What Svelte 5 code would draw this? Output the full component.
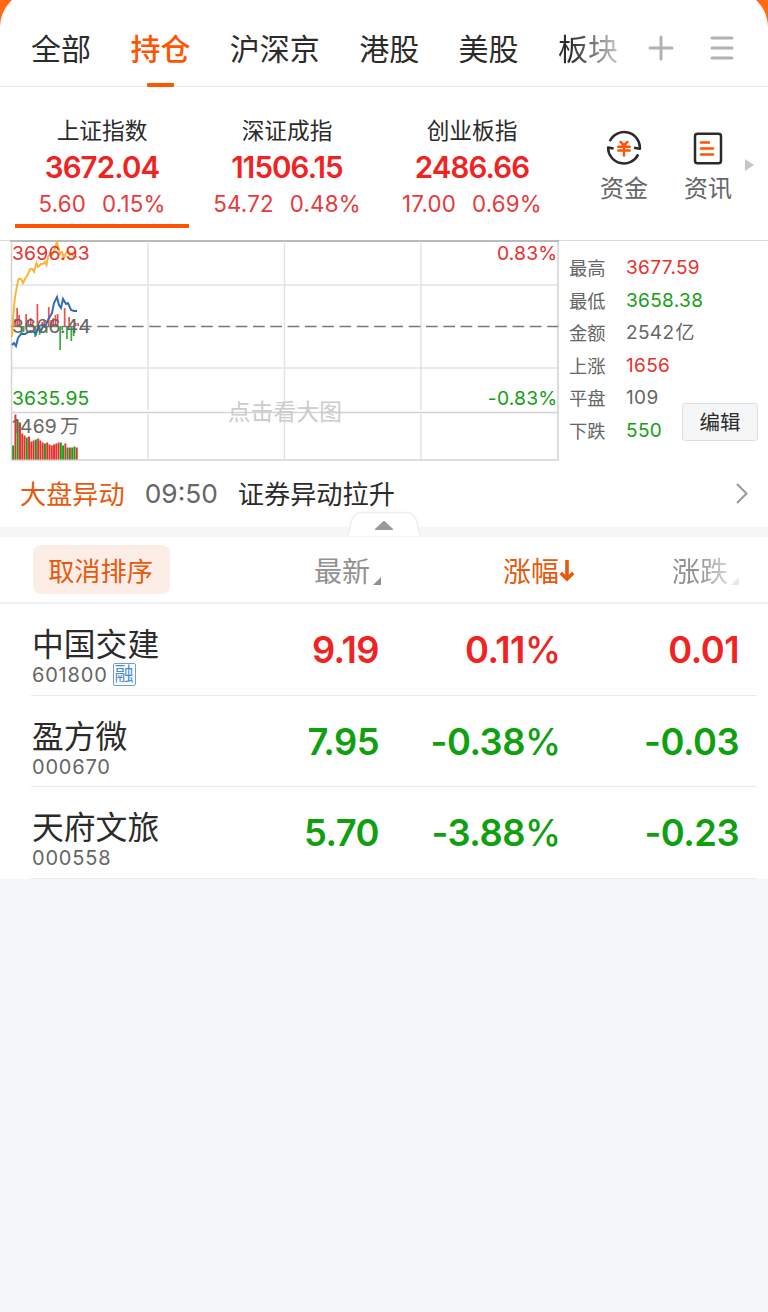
<script lang="ts">
  type Trend = 'up' | 'down' | 'flat';

  const tabs = ['全部', '持仓', '沪深京', '港股', '美股', '板块'];
  let activeTab = $state('持仓');

  const indices = [
    { name: '上证指数', value: '3672.04', change: '5.60', percent: '0.15%' },
    { name: '深证成指', value: '11506.15', change: '54.72', percent: '0.48%' },
    { name: '创业板指', value: '2486.66', change: '17.00', percent: '0.69%' }
  ];
  let activeIndex = $state(0);

  const stats: { label: string; value: string; unit?: string; trend: Trend }[] = [
    { label: '最高', value: '3677.59', trend: 'up' },
    { label: '最低', value: '3658.38', trend: 'down' },
    { label: '金额', value: '2542', unit: '亿', trend: 'flat' },
    { label: '上涨', value: '1656', trend: 'up' },
    { label: '平盘', value: '109', trend: 'flat' },
    { label: '下跌', value: '550', trend: 'down' }
  ];

  const stocks: { name: string; code: string; margin?: boolean; price: string; percent: string; change: string; trend: Trend }[] = [
    { name: '中国交建', code: '601800', margin: true, price: '9.19', percent: '0.11%', change: '0.01', trend: 'up' },
    { name: '盈方微', code: '000670', price: '7.95', percent: '-0.38%', change: '-0.03', trend: 'down' },
    { name: '天府文旅', code: '000558', price: '5.70', percent: '-3.88%', change: '-0.23', trend: 'down' }
  ];

  // [x, offset from the zero line], positive is up
  const ticks = [
    [3, 3], [5, 7], [7, 18], [9, 11], [11.5, -8], [13.5, -6], [16, 12], [18, 6], [20.5, 8], [22.5, 4],
    [25, -11], [27.3, 22], [29.5, -9], [32, 4], [34, 5], [36.5, -7], [38.6, 19], [41, 6], [43, 8],
    [45.3, 11], [47.5, 12], [50, -24], [52, -4], [54.5, 18], [56.8, -13], [59, 9], [61.2, -15], [63.5, -10],
    [65.5, 3], [68, 3]
  ];

  // turnover bars, negative for the minutes that closed lower
  const volumes = [
    -14, 45, -39, 37, 26, 24, -22, 23, 18, 19, -20, 21, 19, 17, -16, 17, 15, 14, 15, 16, 17, -17, -14,
    16, -12, 12, -12, -13, 12
  ];
</script>

<div class="screen">
  <header>
    <nav>
      {#each tabs as tab}
        <button class="tab" class:active={tab === activeTab} class:fading={tab === '板块'} onclick={() => (activeTab = tab)}>{tab}</button>
      {/each}
    </nav>
    <svg class="plus" width="26" height="26" viewBox="0 0 26 26"><path d="M13 2V24M2 13H24" /></svg>
    <svg class="menu" width="24" height="26" viewBox="0 0 24 26"><path d="M2 3H22M2 13H22M2 23H22" /></svg>
  </header>

  <section class="overview">
    {#each indices as index, i}
      <button class="index" class:active={i === activeIndex} onclick={() => (activeIndex = i)}>
        <span class="name">{index.name}</span>
        <strong>{index.value}</strong>
        <span class="change"><span>{index.change}</span><span>{index.percent}</span></span>
      </button>
    {/each}
    <div class="shortcuts">
      <button class="shortcut">
        <svg width="36" height="36" viewBox="0 0 36 36">
          <path class="line" d="M3.8 11.2A15.8 15.8 0 0 1 33.9 18.8L28 17.7M32.2 24.4A15.8 15.8 0 0 1 2.1 17.6L7.6 18.6" />
          <path class="accent" d="M14.6 11.8L18 15.4L21.4 11.8M12.3 16.8H23.7M12.3 20.6H23.7M18 16V25.5" />
        </svg>
        资金
      </button>
      <button class="shortcut">
        <svg width="36" height="36" viewBox="0 0 36 36">
          <rect class="line" x="5" y="3.8" width="26" height="29.5" rx="2.5" />
          <path class="accent" d="M11 12.5H19M11 18.5H23M11 24.5H23" />
        </svg>
        资讯
      </button>
      <i class="more"></i>
    </div>
  </section>

  <section class="market">
    <svg class="chart" width="549" height="222" viewBox="0 0 549 222">
      <path class="grid" d="M1 45H548M1 128H548M138 3V170M274.5 3V170M411 3V170M138 174V220M274.5 174V220M411 174V220" />
      <path class="frame" d="M1.5 1V220.5M548 1V220.5M1 172.5H548M1 220H549" />
      <path class="top" d="M0 1H549" />
      <text class="hint" x="275" y="180" text-anchor="middle">点击看大图</text>
      {#each volumes as v, i}
        <rect class={v > 0 ? 'up' : 'down'} x={2.2 + i * 2.27} y={219.5 - Math.abs(v)} width="1.95" height={Math.abs(v)} />
      {/each}
      {#each ticks as [x, h]}
        <rect class={h > 0 ? 'up' : 'down'} x={x - 0.7} y={h > 0 ? 86 - h : 86} width="1.7" height={Math.abs(h)} opacity="0.85" />
      {/each}
      <path class="dash" d="M0.8 86.5H548" />
      <path class="average" d="M2 97L3 78L5 57L7 46L8.5 39H11L13 43L16 37L17.5 35L20 29H22L24 32L26.5 23L28 27L31 24H33L35 22L36.5 25L38 17L40 14L42 15L44 12L45 8L47 2L49 10L50 14L52 12L54 18L56 13L58 11L60 15L62 14L64 17H67" />
      <path class="price" d="M2 105L4 103L6 106L8 98L11 94L15 94L20 91L24 92L26 94L28 87L31 91L33 86L35 87L38 80L42 73L44 63L47 57L49 65L51 68L53 59L56 64L58 63L61 70L64 71H67" />
      <text class="up" x="2" y="20">3696.93</text>
      <text class="flat" x="2" y="93">3666.44</text>
      <text class="down" x="2" y="165">3635.95</text>
      <text class="up" x="547.5" y="20" text-anchor="end">0.83%</text>
      <text class="down" x="547.5" y="165" text-anchor="end">-0.83%</text>
      <text class="flat" x="2" y="193">1469<tspan dx="3">万</tspan></text>
    </svg>
    <dl>
      {#each stats as stat}
        <div>
          <dt>{stat.label}</dt>
          <dd class={stat.trend}>{stat.value}{#if stat.unit}<span class="unit">{stat.unit}</span>{/if}</dd>
        </div>
      {/each}
    </dl>
    <button class="edit">编辑</button>
  </section>

  <section class="news">
    <span class="topic">大盘异动</span>
    <time>09:50</time>
    <span class="headline">证券异动拉升</span>
    <svg width="14" height="24" viewBox="0 0 14 24"><path d="M2 3L11.5 12.5L2 22" /></svg>
    <svg class="handle" width="74" height="26" viewBox="0 0 74 26">
      <path class="flap" d="M1 25C3 17 3 1.5 15 1.5H59C71 1.5 71 17 73 25" />
      <path class="arrow" d="M37 10L46 18.5H28Z" />
    </svg>
  </section>

  <section class="list">
    <div class="head">
      <button class="reset">取消排序</button>
      <span class="col">最新<i></i></span>
      <span class="col sorted">涨幅<svg width="16" height="24" viewBox="0 0 16 24"><path d="M8 1V20M1.8 14L8 20L14.2 14" /></svg></span>
      <span class="col last">涨跌<i></i></span>
    </div>
    {#each stocks as stock}
      <div class="row {stock.trend}">
        <div class="stock">
          <span class="title">{stock.name}</span>
          <span class="code">{stock.code}{#if stock.margin}<em>融</em>{/if}</span>
        </div>
        <b>{stock.price}</b>
        <b>{stock.percent.slice(0, -1)}<small>%</small></b>
        <b>{stock.change}</b>
      </div>
    {/each}
  </section>
</div>

<style>
  :global(body) {
    background: #f5f6f8;
  }

  .screen {
    width: 768px;
    height: 1312px;
    overflow: hidden;
    background: linear-gradient(#ff6a13 60px, #f5f6f8 60px);
    color: #2b2b2b;
    font-family: Inter, 'Noto Sans CJK SC', sans-serif;
  }

  button {
    padding: 0;
    border: 0;
    background: none;
    color: inherit;
    font: inherit;
  }

  .up {
    color: #e9302e;
    fill: #e9302e;
  }

  .down {
    color: #14a014;
    fill: #14a014;
  }

  .flat {
    color: #666;
    fill: #666;
  }

  header {
    box-sizing: border-box;
    display: flex;
    align-items: center;
    height: 96px;
    margin-top: -9px;
    padding: 9px 0 0 31px;
    border-bottom: 1px solid #eaeaea;
    border-radius: 36px 36px 0 0;
    background: #fff;
  }

  nav {
    display: flex;
    gap: 39.4px;
    align-self: stretch;
  }

  .tab {
    display: flex;
    flex-direction: column;
    justify-content: space-between;
    align-items: center;
    padding-top: 27px;
    font-size: 30px;
    line-height: 45px;
    white-space: nowrap;
  }

  .tab.active {
    color: #ff5400;
    font-weight: 500;
  }

  .tab.active::after {
    content: '';
    width: 27px;
    height: 4px;
    margin-bottom: -1px;
    border-radius: 1px;
    background: #ff5400;
  }

  .tab.fading {
    background: linear-gradient(90deg, #2b2b2b 20%, #c8c8c8);
    background-clip: text;
    color: transparent;
  }

  header svg {
    margin-top: 10px;
    fill: none;
    stroke: #b2b2b2;
    stroke-width: 3;
    stroke-linecap: round;
  }

  .plus {
    margin-left: 30px;
  }

  .menu {
    margin-left: 36px;
  }

  .overview {
    box-sizing: border-box;
    display: flex;
    gap: 11px;
    height: 153px;
    padding: 28px 0 12px 15px;
    background: #fff;
  }

  .index {
    display: flex;
    flex-direction: column;
    align-items: center;
    width: 174px;
    border-bottom: 4px solid transparent;
  }

  .index.active {
    border-color: #ff5400;
  }

  .index .name {
    padding-top: 1px;
    font-size: 22.7px;
    line-height: 30px;
  }

  .index strong {
    margin-top: -1px;
    color: #f02323;
    font-size: 29.5px;
    font-weight: 600;
    line-height: 44px;
    letter-spacing: -0.9px;
  }

  .change {
    display: flex;
    gap: 16px;
    color: #e9393a;
    font-size: 22.3px;
    line-height: 30px;
    letter-spacing: 0.2px;
  }

  .shortcuts {
    display: flex;
    align-items: flex-start;
    margin-left: 30px;
    padding-top: 15px;
  }

  .shortcut {
    display: flex;
    flex-direction: column;
    align-items: center;
    width: 48px;
    margin-right: 36px;
    color: #666;
    font-size: 24px;
    line-height: 45px;
  }

  .shortcut svg {
    fill: none;
    stroke-width: 2.5;
    stroke-linejoin: round;
  }

  .line {
    stroke: #2b2b2b;
  }

  .accent {
    stroke: #ff5400;
    stroke-linecap: round;
  }

  .more {
    margin: 29px 0 0 -23px;
    border-left: 9px solid #c6c6c6;
    border-top: 6px solid transparent;
    border-bottom: 6px solid transparent;
  }

  .market {
    display: flex;
    height: 221px;
    padding-left: 10px;
    background: linear-gradient(#dcdcdc 1px, #fff 1px);
  }

  .chart {
    flex: none;
    fill: none;
  }

  .grid {
    stroke: #e2e2ea;
    stroke-width: 1.5;
  }

  .frame {
    stroke: #d3d3d8;
    stroke-width: 1.5;
  }

  .top {
    stroke: #bbb;
    stroke-width: 2;
  }

  .dash {
    stroke: #777;
    stroke-width: 1.5;
    stroke-dasharray: 11.7 5.6;
  }

  .average {
    stroke: #f9b73a;
    stroke-width: 2;
  }

  .price {
    stroke: #2f6dbb;
    stroke-width: 2;
  }

  .chart text {
    font-size: 19.3px;
    letter-spacing: 0.2px;
  }

  .chart .hint {
    fill: #ccc;
    font-size: 22.7px;
  }

  dl {
    flex: none;
    width: 113px;
    margin: 12px 0 0 10px;
  }

  dl div {
    display: flex;
    height: 32.5px;
    font-size: 18.3px;
    line-height: 32px;
    white-space: nowrap;
  }

  dt {
    flex: none;
    width: 57px;
    color: #666;
  }

  dd {
    margin: 0;
    font-size: 19px;
    letter-spacing: 0.35px;
  }

  .unit {
    margin-left: 1px;
  }

  .edit {
    box-sizing: border-box;
    width: 76px;
    height: 38px;
    margin-top: 163px;
    border: 1px solid #dcdfe3;
    border-radius: 3px;
    background: #f5f6f8;
    font-size: 20.5px;
    line-height: 37px;
  }

  .news {
    position: relative;
    box-sizing: border-box;
    display: flex;
    align-items: center;
    height: 76px;
    padding: 0 19px 2px 20px;
    border-bottom: 10px solid #f5f6f8;
    background: #fff;
    font-size: 26.2px;
  }

  .topic {
    color: #e8590c;
  }

  time {
    margin: 0 20px;
    color: #666;
    font-size: 26.3px;
  }

  .news svg {
    margin-left: auto;
    fill: none;
    stroke: #999;
    stroke-width: 2;
  }

  .news .handle {
    position: absolute;
    left: 347px;
    top: 50px;
  }

  .news .flap {
    fill: #fff;
    stroke: #eceef0;
    stroke-width: 1.5;
  }

  .news .arrow {
    fill: #999;
    stroke: #999;
    stroke-width: 1;
    stroke-linejoin: round;
  }

  .list {
    background: #fff;
  }

  .head {
    box-sizing: border-box;
    display: flex;
    align-items: center;
    height: 67px;
    padding-left: 33px;
    border-bottom: 2px solid #f1f1f3;
  }

  .reset {
    width: 137px;
    height: 49px;
    padding: 1px 2px 0 0;
    border-radius: 8px;
    background: #fceee6;
    color: #e8590c;
    font-size: 26.2px;
  }

  .col {
    display: flex;
    justify-content: flex-end;
    align-items: center;
    width: 211px;
    padding-top: 4px;
    color: #919191;
    font-size: 28px;
    line-height: 42px;
  }

  .col.sorted {
    width: 194px;
    color: #e8590c;
  }

  .col.sorted svg {
    margin-top: -2px;
    fill: none;
    stroke: #e8590c;
    stroke-width: 3.6;
  }

  .col.last {
    width: 164px;
    background: linear-gradient(90deg, #919191 75%, #ddd 95%);
    background-clip: text;
    color: transparent;
  }

  .col i {
    margin: 18px 0 0 3px;
    border-left: 8px solid transparent;
    border-bottom: 8px solid #919191;
  }

  .col.last i {
    border-bottom-color: #e8e8e8;
  }

  .row {
    box-sizing: border-box;
    display: flex;
    align-items: center;
    height: 91.7px;
    margin: 0 11px 0 31px;
    border-bottom: 1.5px solid #eaebed;
  }

  .stock {
    display: flex;
    flex-direction: column;
    width: 167px;
    padding: 15px 0 0 1px;
    color: #2b2b2b;
  }

  .title {
    font-size: 31.8px;
    line-height: 36px;
  }

  .code {
    display: flex;
    align-items: center;
    gap: 5px;
    height: 24px;
    color: #666;
    font-size: 20px;
    letter-spacing: 0.8px;
  }

  em {
    width: 21px;
    height: 21px;
    border: 1px solid #6ba0dc;
    border-radius: 2px;
    color: #4a8bd4;
    font-size: 19px;
    font-style: normal;
    letter-spacing: 0;
    line-height: 22px;
    text-align: center;
  }

  b {
    width: 180px;
    padding-top: 1px;
    font-size: 36.3px;
    font-weight: 600;
    letter-spacing: -0.5px;
    text-align: right;
  }

  b small {
    margin-right: -2px;
    font-size: inherit;
    font-weight: 500;
    letter-spacing: 0;
  }

  .row.up b {
    color: #f02323;
  }

  .row.down b {
    color: #0fa00f;
  }
</style>
